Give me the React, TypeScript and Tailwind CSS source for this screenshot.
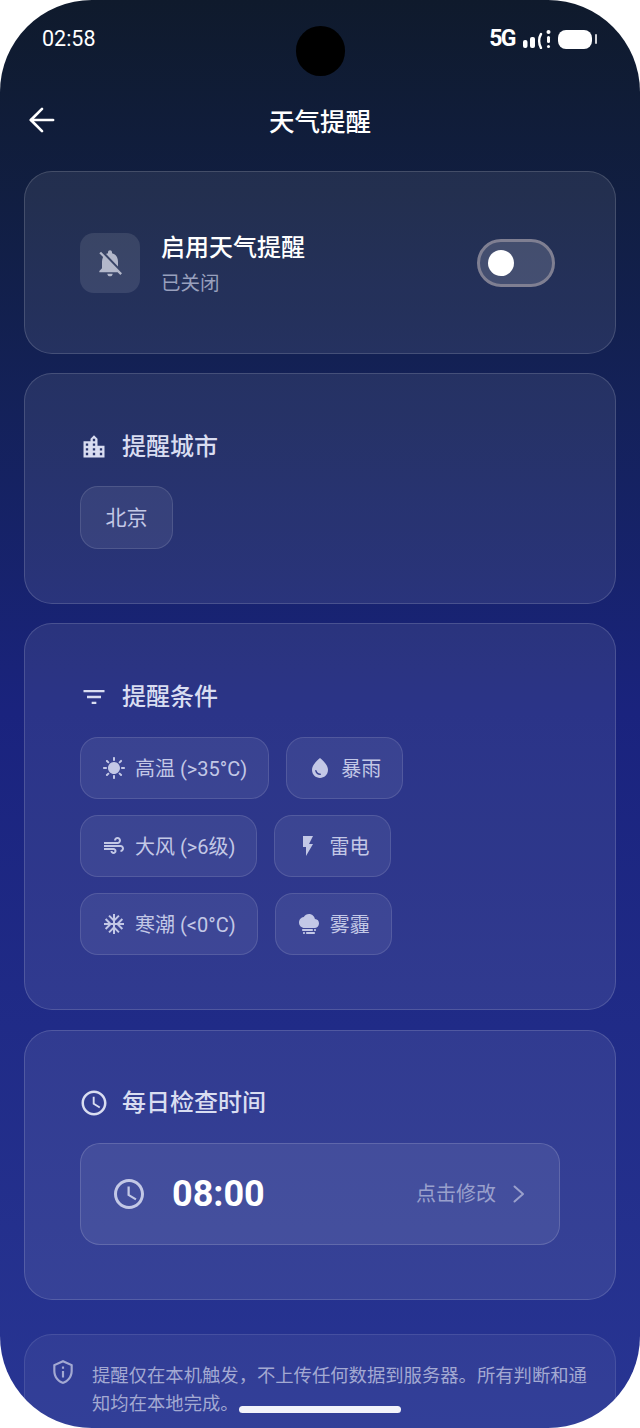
import type { ReactNode } from "react"
import { ArrowLeft } from "lucide-react"
import {
  MdAccessTime,
  MdAcUnit,
  MdAir,
  MdFilterList,
  MdFlashOn,
  MdFoggy,
  MdLocationCity,
  MdNotificationsOff,
  MdOutlinePrivacyTip,
  MdSunny,
  MdWaterDrop,
} from "react-icons/md"

const FONT = "font-['Roboto','Noto_Sans_CJK_SC',sans-serif]"

const conditions = [
  { label: "高温 (>35°C)", icon: <MdSunny size={24} /> },
  { label: "暴雨", icon: <MdWaterDrop size={24} /> },
  { label: "大风 (>6级)", icon: <MdAir size={24} /> },
  { label: "雷电", icon: <MdFlashOn size={24} /> },
  { label: "寒潮 (<0°C)", icon: <MdAcUnit size={24} /> },
  { label: "雾霾", icon: <MdFoggy size={24} /> },
]

function Card({ children, className = "" }: { children: ReactNode; className?: string }) {
  return (
    <div className={`rounded-[28px] border border-white/15 bg-white/[0.08] px-[55px] ${className}`}>
      {children}
    </div>
  )
}

function SectionTitle({ icon, title }: { icon: ReactNode; title: string }) {
  return (
    <div className="flex items-center gap-[14px] text-[#d9ddf1]">
      <span className="flex h-7 w-7 items-center justify-center">{icon}</span>
      <h2 className="text-[24px] leading-[34px] font-medium">{title}</h2>
    </div>
  )
}

function Chip({ icon, label }: { icon: ReactNode; label: string }) {
  return (
    <div className="flex h-[62px] items-center gap-[9px] rounded-[18px] border border-white/[0.12] bg-white/[0.07] px-[21px] text-[20px] text-[#c3c8e6]">
      {icon}
      <span className="pt-[2px]">{label}</span>
    </div>
  )
}

function SignalIcon() {
  return (
    <svg width="28" height="20" viewBox="0 0 28 20" fill="white">
      <rect x="0" y="11" width="4.5" height="8" rx="2" />
      <rect x="7" y="8" width="5" height="11" rx="2" />
      <path d="M18 5 C15.5 9 15.5 15 18 19" fill="none" stroke="white" strokeWidth="2.4" strokeLinecap="round" />
      <rect x="23.5" y="1" width="4" height="4" rx="2" />
      <rect x="24" y="7" width="3" height="7" rx="1.5" />
      <rect x="24" y="16" width="3" height="3" rx="1.5" />
    </svg>
  )
}

export default function App() {
  return (
    <div className="h-[1428px] w-[640px] bg-white">
      <div
        className={`relative h-full w-full overflow-hidden rounded-[92px] bg-gradient-to-b from-[#0f1a2c] via-[#1a237e] via-50% to-[#283593] ${FONT}`}
      >
        {/* Camera cutout */}
        <div className="absolute top-[26px] left-[296px] h-[50px] w-[49px] rounded-full bg-black" />

        {/* Status bar */}
        <div className="flex h-[78px] items-start justify-between pt-[26px] pr-[43px] pl-[42px] text-white">
          <span className="text-[21.5px] leading-[26px]">02:58</span>
          <div className="flex items-center">
            <span className="text-[23px] leading-[26px] font-bold tracking-[-1.5px]">5G</span>
            <div className="ml-[8px]">
              <SignalIcon />
            </div>
            <div className="ml-[7px] h-[19px] w-[34px] rounded-[8px] bg-white" />
            <div className="ml-[3px] h-[10px] w-[2px] rounded-full bg-white/80" />
          </div>
        </div>

        {/* Header */}
        <div className="flex h-[93px] items-start justify-between px-[23px] pt-[23px] text-white">
          <ArrowLeft size={38} strokeWidth={1.7} />
          <h1 className="mt-[1px] text-[25.5px] leading-[40px] font-medium">天气提醒</h1>
          <div className="w-[38px]" />
        </div>

        <div className="flex flex-col px-[24px]">
          {/* Master switch */}
          <Card className="flex h-[183px] items-center justify-between">
            <div className="flex items-center gap-[21px]">
              <div className="flex h-[60px] w-[60px] items-center justify-center rounded-[14px] bg-white/10 text-[#b3b8ca]">
                <MdNotificationsOff size={32} />
              </div>
              <div className="pt-[3px]">
                <p className="text-[24px] leading-[34px] font-medium text-white">启用天气提醒</p>
                <p className="mt-[5px] text-[19.5px] leading-[28px] text-[#99a0bd]">已关闭</p>
              </div>
            </div>
            <div className="mr-[5px] flex h-[48px] w-[78px] items-center rounded-full border-[3px] border-[#7f7f92] bg-white/15 pl-[8px]">
              <div className="h-[26px] w-[26px] rounded-full bg-white" />
            </div>
          </Card>

          {/* City */}
          <Card className="mt-[19px] h-[231px] pt-[56px]">
            <SectionTitle icon={<MdLocationCity size={28} />} title="提醒城市" />
            <div className="mt-[22px] flex h-[63px] w-[93px] items-center justify-center rounded-[18px] border border-white/[0.12] bg-white/[0.07] pt-[3px] text-[21px] text-[#c3c8e6]">
              北京
            </div>
          </Card>

          {/* Conditions */}
          <Card className="mt-[19px] h-[387px] pt-[56px]">
            <SectionTitle icon={<MdFilterList size={28} />} title="提醒条件" />
            <div className="mt-[23px] flex flex-wrap gap-x-[17px] gap-y-4">
              {conditions.map((c) => (
                <Chip key={c.label} icon={c.icon} label={c.label} />
              ))}
            </div>
          </Card>

          {/* Daily check time */}
          <Card className="mt-[20px] h-[270px] pt-[55px]">
            <SectionTitle icon={<MdAccessTime size={30} className="shrink-0" />} title="每日检查时间" />
            <div className="mt-[23px] flex h-[102px] items-center rounded-[20px] border border-white/15 bg-white/[0.08] pr-[33px] pl-[30px]">
              <MdAccessTime size={36} className="text-[#c3c8e6]" />
              <span className="ml-[25px] text-[36px] leading-none font-bold text-white">08:00</span>
              <span className="ml-auto text-[20px] text-[#9aa0cc]">点击修改</span>
              <svg
                width="14"
                height="20"
                viewBox="0 0 14 20"
                fill="none"
                stroke="currentColor"
                strokeWidth="2"
                strokeLinecap="round"
                strokeLinejoin="round"
                className="ml-[16px] text-[#9aa0cc]"
              >
                <path d="M2.5 2.5 L11 10 L2.5 17.5" />
              </svg>
            </div>
          </Card>

          {/* Privacy note */}
          <div className="mt-[34px] flex gap-[16px] rounded-[28px] border border-white/10 bg-white/[0.05] px-[25px] pt-[27px] pb-[30px]">
            <MdOutlinePrivacyTip size={26} className="-mt-[3px] shrink-0 text-[#a3a9d2]" />
            <p className="text-[18.33px] leading-[28px] text-[#a3a9d2]">
              提醒仅在本机触发，不上传任何数据到服务器。所有判断和通知均在本地完成。
            </p>
          </div>
        </div>

        {/* Home indicator */}
        <div className="absolute bottom-[15px] left-[239px] h-[7px] w-[162px] rounded-full bg-[#f2f3fa]" />
      </div>
    </div>
  )
}
